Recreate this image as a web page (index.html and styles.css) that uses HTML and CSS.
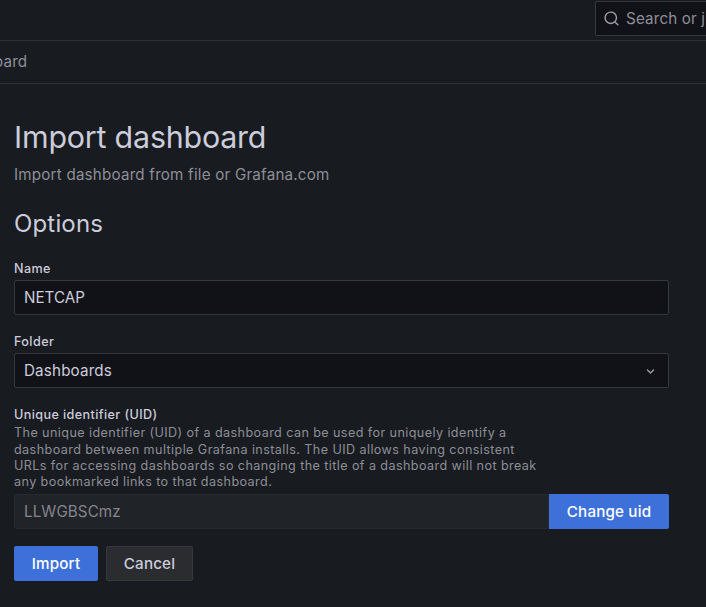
FILE: index.html
```html
<!DOCTYPE html>
<html lang="en">
<head>
<meta charset="utf-8">
<title>Import dashboard</title>
<link rel="stylesheet" href="styles.css">
</head>
<body>
<header class="topbar">
  <div class="search">
    <svg class="search-icon" viewBox="0 0 24 24"><path d="M21.71,20.29,18,16.61A9,9,0,1,0,16.61,18l3.68,3.68a1,1,0,0,0,1.42,0A1,1,0,0,0,21.71,20.29ZM11,18a7,7,0,1,1,7-7A7,7,0,0,1,11,18Z"/></svg>
    <span>Search or jump to...</span>
  </div>
</header>
<nav class="crumbs"><span class="crumb">Import dashboard</span></nav>
<main class="page">
  <h1>Import dashboard</h1>
  <p class="subtitle">Import dashboard from file or Grafana.com</p>
  <h2>Options</h2>
  <form class="form">
    <div class="field">
      <label class="label">Name</label>
      <div class="input name">NETCAP</div>
    </div>
    <div class="field">
      <label class="label">Folder</label>
      <div class="input select"><span>Dashboards</span>
        <svg class="chevron" viewBox="0 0 24 24"><path d="M17,9.17a1,1,0,0,0-1.41,0L12,12.71,8.46,9.17a1,1,0,0,0-1.41,0,1,1,0,0,0,0,1.42l4.24,4.24a1,1,0,0,0,1.42,0L17,10.59A1,1,0,0,0,17,9.17Z"/></svg>
      </div>
    </div>
    <div class="field uid">
      <label class="label">Unique identifier (UID)</label>
      <p class="description">The unique identifier (UID) of a dashboard can be used for uniquely identify a<br>dashboard between multiple Grafana installs. The UID allows having consistent<br>URLs for accessing dashboards so changing the title of a dashboard will not break<br>any bookmarked links to that dashboard.</p>
      <div class="group">
        <div class="input disabled">LLWGBSCmz</div>
        <button type="button" class="button primary change">Change uid</button>
      </div>
    </div>
    <div class="actions">
      <button type="button" class="button primary import">Import</button>
      <button type="button" class="button secondary">Cancel</button>
    </div>
  </form>
</main>
</body>
</html>
```
FILE: styles.css
```css
* { box-sizing: border-box; }
body { margin: 0; height: 607px; overflow: hidden; background: #181b1f; color: #ccccdc; font: 400 15.2px/24px Inter, sans-serif; letter-spacing: 0.16px; }
.topbar { height: 41px; padding-top: 1px; border-bottom: 1px solid #2e3034; display: flex; justify-content: flex-end; overflow: hidden; }
.search { flex: none; width: 111px; height: 35px; padding-left: 7px; display: flex; align-items: center; gap: 6px; background: #111217; border: 1px solid #36383d; border-right: 0; border-radius: 2px 0 0 2px; color: #8e8e99; white-space: nowrap; overflow: hidden; }
.search-icon { flex: none; width: 17px; height: 17px; fill: #9b9ba6; }
.crumbs { height: 43px; border-bottom: 1px solid #2e3034; display: flex; align-items: center; color: #8e8e99; }
.crumb { margin-left: -103px; white-space: nowrap; }
.page { padding: 36px 37px 0 14px; }
h1 { margin: 0; font-size: 30.4px; line-height: 35px; font-weight: 400; letter-spacing: -0.2px; }
.subtitle { margin: 8px 0 0; color: #8e8e99; letter-spacing: 0.2px; }
h2 { margin: 22px 0 0; font-size: 24px; line-height: 30px; font-weight: 400; letter-spacing: 0.16px; }
.field { margin-top: 18px; }
.form .field:first-child { margin-top: 21px; }
.label { display: block; height: 20px; font-size: 12.6px; line-height: 17px; font-weight: 500; letter-spacing: 0.4px; }
.input { height: 35px; padding: 0 9px; border: 1px solid #36383d; border-radius: 2px; background: #111217; display: flex; align-items: center; }
.name { letter-spacing: 0; }
.select { justify-content: space-between; }
.chevron { width: 17px; height: 17px; margin-top: 2px; fill: #9a9aa6; }
.uid .label { height: 19.25px; }
.description { margin: 0 0 3.75px; font-size: 12.6px; line-height: 16.25px; color: #8e8e99; letter-spacing: 0.41px; }
.group { display: flex; }
.disabled { flex: 1; background: #202327; border-color: #26292d; color: #85858e; border-radius: 2px 0 0 2px; letter-spacing: 0.08px; }
.button { height: 35px; padding: 0; border: 0; border-radius: 2px; font: 500 15.2px/33px Inter, sans-serif; letter-spacing: 0.16px; }
.primary { background: #3d71d9; color: #fff; }
.change { width: 120px; border-radius: 0 2px 2px 0; }
.actions { display: flex; gap: 8px; margin-top: 17px; }
.import { width: 84px; }
.secondary { width: 87px; background: #2b2c30; border: 1px solid #36383d; color: #ccccdc; }
```
